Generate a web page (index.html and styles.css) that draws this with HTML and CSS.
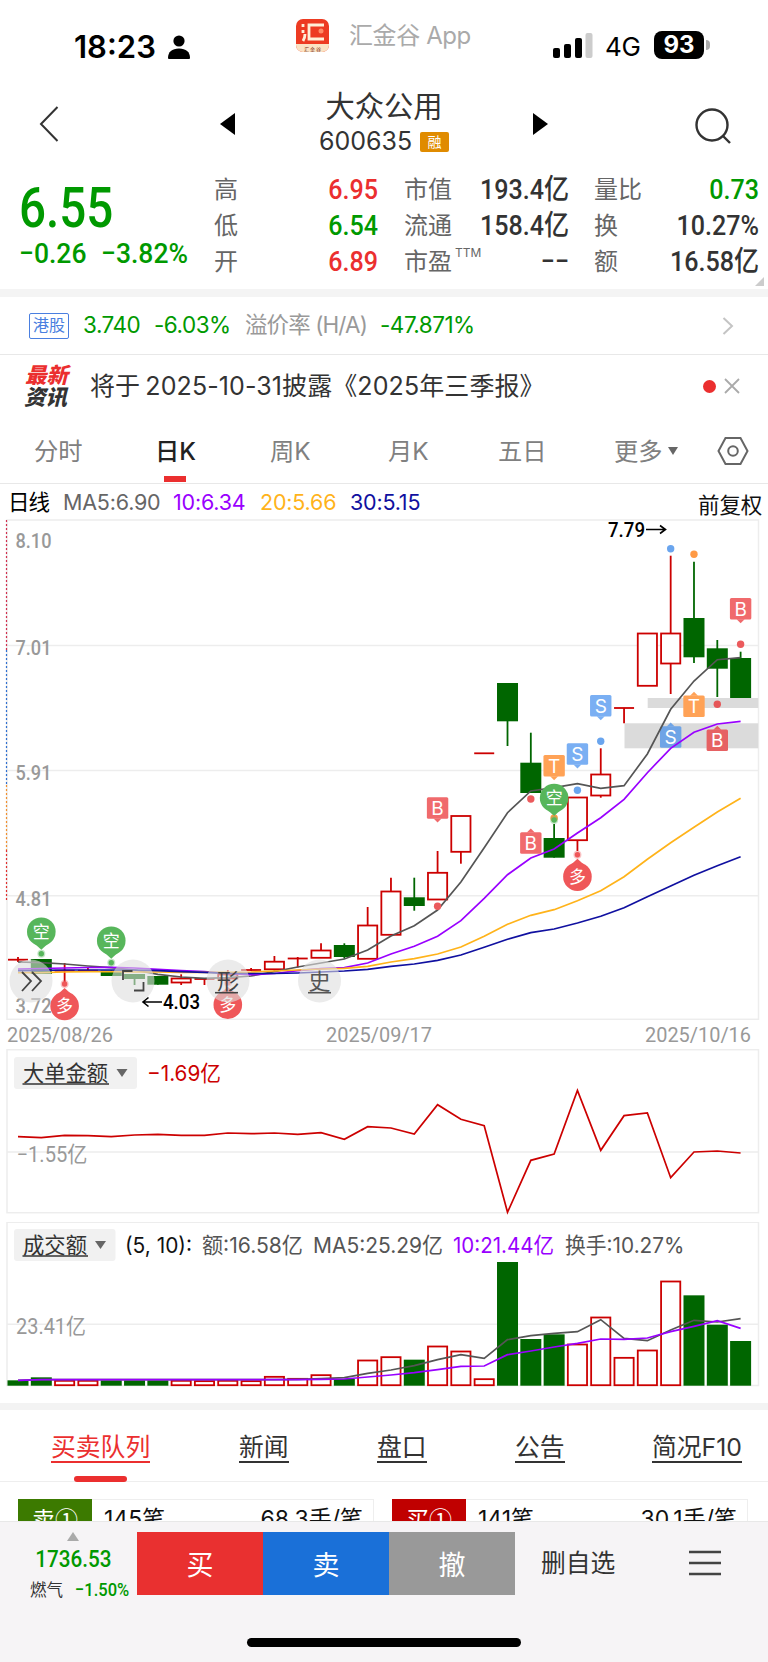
FILE: index.html
```html
<!DOCTYPE html>
<html lang="zh-CN">
<head>
<meta charset="UTF-8">
<meta name="viewport" content="width=device-width, initial-scale=1.0">
<title>大众公用 600635</title>
<link rel="stylesheet" href="styles.css">
</head>
<body>

<div class="status-bar">
    <span class="clock">18:23</span>
    <svg class="person" width="22" height="24" viewBox="0 0 22 24"><circle cx="11" cy="6" r="5.6"/><path d="M0 23C0 17 4 13.500 11 13.500S22 17 22 23Q22 24 21 24H1Q0 24 0 23Z"/></svg>
    <svg class="app-icon" width="33" height="33" viewBox="0 0 33 33">
        <rect width="33" height="33" rx="7" fill="#ed3b22"/>
        <path d="M0 25H33V26A7 7 0 0 1 26 33H7A7 7 0 0 1 0 26Z" fill="#fbe3c4"/>
        <path d="M28 6H13V20H28M7 5V8M7 11V14M9 15Q9 19 7 22" fill="none" stroke="#fff0d8" stroke-width="2.800"/>
        <circle cx="25" cy="12" r="2.500" fill="#ff8a66"/>
        <text x="8" y="31.500" font-size="5" fill="#7a2a10" textLength="17">汇金谷</text>
    </svg>
    <span class="app-name">汇金谷 App</span>
    <svg class="signal" width="40" height="26" viewBox="0 0 40 26">
        <rect x="0" y="15" width="7" height="10" rx="2"/>
        <rect x="11" y="11" width="7" height="14" rx="2"/>
        <rect x="22" y="5" width="7" height="20" rx="2"/>
        <rect x="32.500" y="0" width="7" height="25" rx="2" fill="#ccc"/>
    </svg>
    <span class="network">4G</span>
    <span class="battery">93</span>
    <span class="battery-tip"></span>
</div>

<div class="title-bar">
    <svg class="back" width="20" height="38" viewBox="0 0 20 38"><path d="M18.500 2L2 19L18.500 36" fill="none" stroke="#333" stroke-width="2"/></svg>
    <svg class="prev" width="15" height="22" viewBox="0 0 15 22"><path d="M15 0V22L0 11Z"/></svg>
    <div class="stock">
        <div class="stock-name">大众公用</div>
        <div class="stock-code"><span>600635</span><i>融</i></div>
    </div>
    <svg class="next" width="15" height="22" viewBox="0 0 15 22"><path d="M0 0V22L15 11Z"/></svg>
    <svg class="search" width="38" height="38" viewBox="0 0 38 38"><g fill="none" stroke="#333" stroke-width="2.400"><circle cx="18" cy="18" r="15.500"/><path d="M28.500 28.500L36 36"/></g></svg>
</div>

<div class="quote">
    <div class="price down">
        <div class="last"><b class="din">6.55</b></div>
        <div class="change"><b class="din">−0.26</b><b class="din">−3.82%</b></div>
    </div>
    <dl class="stats col-a">
        <dt>高</dt><dd class="din up">6.95</dd>
        <dt>低</dt><dd class="din down">6.54</dd>
        <dt>开</dt><dd class="din up">6.89</dd>
    </dl>
    <dl class="stats col-b">
        <dt>市值</dt><dd class="din">193.4亿</dd>
        <dt>流通</dt><dd class="din">158.4亿</dd>
        <dt>市盈<sup>TTM</sup></dt><dd class="din">−−</dd>
    </dl>
    <dl class="stats col-c">
        <dt>量比</dt><dd class="din down">0.73</dd>
        <dt>换</dt><dd class="din">10.27%</dd>
        <dt>额</dt><dd class="din">16.58亿</dd>
    </dl>
    <span class="corner"></span>
</div>

<div class="hk-row">
    <span class="hk-tag">港股</span>
    <span class="hk-price">3.740</span>
    <span class="hk-change">-6.03%</span>
    <span class="hk-label">溢价率 (H/A)</span>
    <span class="hk-premium">-47.871%</span>
    <svg class="arrow" width="12" height="18" viewBox="0 0 12 18"><path d="M1.500 1L10 9L1.500 17" fill="none" stroke="#c4c4c4" stroke-width="2"/></svg>
</div>

<div class="news">
    <div class="news-logo"><span>最新</span><span>资讯</span></div>
    <div class="news-text">将于 2025-10-31披露《2025年三季报》</div>
    <span class="news-dot"></span>
    <svg width="16" height="16" viewBox="0 0 16 16"><path d="M1 1L15 15M15 1L1 15" stroke="#aaa" stroke-width="1.800"/></svg>
</div>

<div class="period-tabs">
    <span>分时</span>
    <span class="active">日K</span>
    <span>周K</span>
    <span>月K</span>
    <span>五日</span>
    <span class="more">更多<i class="caret"></i></span>
    <svg class="setting" width="32" height="30" viewBox="0 0 32 30"><g fill="none" stroke="#666" stroke-width="2"><path d="M8.500 2H23.500L30.500 15L23.500 28H8.500L1.500 15Z"/><circle cx="16" cy="15" r="4.800"/></g></svg>
</div>

<div class="ma-row">
    <span class="ma-name">日线</span>
    <span class="ma5">MA5:6.90</span>
    <span class="ma10">10:6.34</span>
    <span class="ma20">20:5.66</span>
    <span class="ma30">30:5.15</span>
    <span class="adjust">前复权</span>
</div>

<svg id="kline" class="chart" width="768" height="530" viewBox="0 519 768 530"></svg>
<svg id="bigOrder" class="chart" width="768" height="173" viewBox="0 1049 768 173"></svg>
<svg id="turnover" class="chart" width="768" height="181" viewBox="0 1222 768 181"></svg>

<div class="info-tabs">
    <span class="active"><u>买卖队列</u></span>
    <span><u>新闻</u></span>
    <span><u>盘口</u></span>
    <span><u>公告</u></span>
    <span><u>简况F10</u></span>
</div>

<div class="queue">
    <div class="queue-box sell"><b>卖①</b><span>145笔</span><span>68.3手/笔</span></div>
    <div class="queue-box buy"><b>买①</b><span>141笔</span><span>30.1手/笔</span></div>
</div>

<div class="bottom-bar">
    <div class="actions">
        <div class="index">
            <i class="index-up"></i>
            <b class="din">1736.53</b>
            <div class="index-sub"><span>燃气</span><b class="din">−1.50%</b></div>
        </div>
        <button class="btn buy">买</button>
        <button class="btn sell">卖</button>
        <button class="btn cancel">撤</button>
        <span class="remove">删自选</span>
        <svg width="32" height="26" viewBox="0 0 32 26"><path d="M0 2H32M0 13H32M0 24H32" stroke="#444" stroke-width="2.400"/></svg>
    </div>
    <div class="home-bar"></div>
</div>

<script src="chart.js"></script>
</body>
</html>
```

FILE: styles.css
```css
* {
    box-sizing: border-box;
}
body {
    margin: 0;
    width: 768px;
    height: 1662px;
    overflow: hidden;
    background: #fff;
    color: #333;
    font-family: Inter, "Noto Sans CJK SC", sans-serif;
    font-size: 24px;
    line-height: 1;
    white-space: nowrap;
}
svg {
    display: block;
    flex: none;
}
i {
    font-style: normal;
}
.din {
    font-family: Roboto, "Noto Sans CJK SC", sans-serif;
    font-weight: 500;
    display: block;
    transform: scaleX(.88);
    transform-origin: left;
}
.up {
    color: #eb2f2f !important;
}
.down {
    color: #009900 !important;
}

/* status bar */
.status-bar {
    display: flex;
    height: 84px;
    padding-left: 74px;
    color: #000;
}
.clock {
    width: 94px;
    padding-top: 31px;
    font-size: 31px;
    font-weight: 600;
    letter-spacing: 0;
}
.person {
    margin-top: 35px;
}
.app-icon {
    margin: 19px 20px 0 106px;
}
.app-name {
    width: 204px;
    padding-top: 24px;
    font-size: 24px;
    letter-spacing: -.4px;
    color: #aaa;
}
.signal {
    margin-top: 33px;
}
.network {
    width: 50px;
    padding: 34px 0 0 12px;
    font-size: 26px;
    letter-spacing: -.3px;
}
.battery {
    width: 50px;
    height: 28px;
    margin-top: 31px;
    margin-left: 11px;
    border-radius: 8px;
    background: #000;
    color: #fff;
    font-size: 24px;
    font-weight: 700;
    line-height: 28px;
    text-align: center;
}
.battery-tip {
    width: 4px;
    height: 10px;
    margin: 40px 0 0 2px;
    border-radius: 0 5px 5px 0;
    background: #aaa;
}

/* title */
.title-bar {
    display: flex;
    height: 83px;
    padding-left: 39px;
}
.back {
    margin-top: 21px;
}
.prev {
    margin: 29px 0 0 161px;
}
.stock {
    width: 298px;
    padding-top: 8px;
    text-align: center;
}
.stock-name {
    font-size: 29.3px;
}
.stock-code {
    display: flex;
    align-items: center;
    justify-content: center;
    margin-top: 8px;
    font-size: 25px;
}
.stock-code i {
    width: 29px;
    height: 20px;
    margin-left: 8px;
    border-radius: 2px;
    background: #e08b00;
    color: #fff;
    font-size: 14px;
    line-height: 20px;
}
.next {
    margin-top: 29px;
}
.search {
    margin: 23px 0 0 146px;
}

/* quote */
.quote {
    display: flex;
    position: relative;
    height: 122px;
}
.price {
    width: 214px;
    padding: 13px 0 0 19px;
}
.last {
    font-size: 56px;
}
.last .din {
    transform: scaleX(.85);
}
.change {
    display: flex;
    margin-top: 4px;
    font-size: 28.5px;
}
.change .din {
    width: 82px;
    transform: scaleX(.93);
}
.stats {
    display: grid;
    grid-template-columns: auto 1fr;
    grid-template-rows: 36px 36px 36px;
    margin: 5px 0 0;
    line-height: 36px;
}
.stats dt {
    color: #666;
}
.stats dd {
    margin: 0;
    text-align: right;
    font-size: 28.5px;
    transform-origin: right;
}
.stats sup {
    display: inline-block;
    width: 0;
    font-size: 12px;
    line-height: 1;
    vertical-align: 13px;
    text-indent: 3px;
}
.col-a {
    width: 164px;
}
.col-b {
    width: 165px;
    margin-left: 26px;
}
.col-c {
    width: 165px;
    margin-left: 25px;
}
.corner {
    position: absolute;
    right: 4px;
    bottom: 3px;
    border-left: 9px solid transparent;
    border-bottom: 9px solid #ccc;
}

/* H share row */
.hk-row {
    display: flex;
    align-items: center;
    height: 66px;
    padding: 8px 34px 0 29px;
    border-bottom: 1px solid #e8e8e8;
    background: linear-gradient(#f4f4f4 8px, #fff 8px);
    font-size: 22.5px;
    color: #009900;
}
.hk-tag {
    width: 40px;
    height: 26px;
    border: 1.500px solid #4a7fe0;
    border-radius: 2px;
    color: #4a7fe0;
    font-size: 16px;
    line-height: 23px;
    text-align: center;
}
.hk-price {
    width: 71px;
    margin-left: 14px;
    letter-spacing: -.5px;
}
.hk-change {
    width: 91px;
    letter-spacing: -.5px;
}
.hk-label {
    width: 135px;
    color: #999;
    letter-spacing: -.9px;
}
.hk-premium {
    letter-spacing: -.5px;
}
.arrow {
    margin-left: auto;
}

/* news */
.news {
    display: flex;
    align-items: center;
    height: 64px;
    padding: 0 28px 2px 24px;
}
.news-logo {
    display: grid;
    width: 66px;
    color: #333;
    font-size: 21.5px;
    font-weight: 900;
    font-style: italic;
    line-height: 22px;
}
.news-logo span:first-child {
    padding-left: 1px;
    color: #eb2f2f;
}
.news-text {
    flex: 1;
    font-size: 25px;
    letter-spacing: .1px;
    word-spacing: -2px;
}
.news-dot {
    width: 13px;
    height: 13px;
    margin-right: 8px;
    border-radius: 50%;
    background: #eb2f2f;
}

/* period tabs */
.period-tabs {
    display: grid;
    grid-template-columns: 121px 115px 118px 110px 116px 103px 32px;
    align-items: center;
    height: 65px;
    padding-left: 34px;
    border-bottom: 1px solid #e8e8e8;
    color: #808080;
    font-size: 24.3px;
}
.period-tabs .active {
    position: relative;
    color: #222;
    font-weight: 500;
}
.period-tabs .active::after {
    content: "";
    position: absolute;
    left: 9px;
    top: 37px;
    width: 22px;
    height: 6px;
    background: #eb2f2f;
}
.more {
    display: flex;
    align-items: center;
}
.caret {
    margin-left: 5px;
    border: 5.500px solid transparent;
    border-top: 8px solid #666;
    border-bottom: 0;
}

/* moving averages */
.ma-row {
    display: flex;
    align-items: center;
    height: 35px;
    padding: 2px 6px 0 8px;
    font-size: 21.5px;
    letter-spacing: -.2px;
}
.ma-name {
    width: 55px;
    color: #000;
    letter-spacing: -1px;
}
.ma5 {
    width: 110px;
    color: #666;
}
.ma10 {
    width: 87px;
    color: #9900ff;
}
.ma20 {
    width: 90px;
    color: #ffb31a;
}
.ma30 {
    color: #1010a0;
}
.adjust {
    margin-left: auto;
    padding-top: 6px;
    color: #111;
}

/* charts */
.chart text {
    font-family: Roboto, "Noto Sans CJK SC", sans-serif;
}
.chart .ui {
    font-family: Inter, "Noto Sans CJK SC", sans-serif;
}

/* info tabs */
.info-tabs {
    display: grid;
    grid-template-columns: 188px 138px 138px 137px 1fr;
    height: 79px;
    padding: 25px 0 0 51px;
    border-top: 7px solid #f3f3f3;
    border-bottom: 1px solid #eee;
}
.info-tabs span {
    position: relative;
}
.info-tabs u {
    display: inline-block;
    height: 28px;
    border-bottom: 2px solid currentColor;
    font-size: 24.8px;
    text-decoration: none;
}
.info-tabs .active {
    color: #eb2f2f;
}
.info-tabs .active::after {
    content: "";
    position: absolute;
    left: 23px;
    top: 41px;
    width: 53px;
    height: 6px;
    border-radius: 3px;
    background: #eb2f2f;
}

/* order queue */
.queue {
    display: grid;
    grid-template-columns: 356px 356px;
    gap: 18px;
    height: 39px;
    padding: 17px 0 0 18px;
    overflow: hidden;
}
.queue-box {
    display: flex;
    height: 40px;
    padding-right: 10px;
    border: 1px solid #eee;
    border-left: 0;
    color: #111;
    font-size: 23px;
    line-height: 38px;
}
.queue-box b {
    width: 74px;
    height: 40px;
    margin: -1px 12px 0 0;
    color: #fff;
    font-family: "Noto Sans CJK SC", sans-serif;
    font-weight: 400;
    text-align: center;
}
.queue-box span:last-child {
    margin-left: auto;
}
.queue .sell b {
    background: #3c7a00;
}
.queue .buy b {
    background: #c00000;
}

/* bottom bar */
.bottom-bar {
    height: 141px;
    border-top: 1px solid #e8e8e8;
    background: #f6f4f6;
}
.actions {
    display: flex;
    align-items: center;
    height: 82px;
}
.index {
    display: flex;
    flex-direction: column;
    align-items: center;
    width: 137px;
    height: 82px;
    padding-top: 10px;
    color: #009900;
}
.index-up {
    margin-left: 9px;
    border: 6px solid transparent;
    border-top: 0;
    border-bottom: 9px solid #aaa;
}
.index > .din {
    margin: 7px 0 0 9px;
    font-size: 23.5px;
    transform-origin: center;
}
.index-sub {
    display: flex;
    align-items: center;
    align-self: flex-end;
    width: 107px;
    margin-top: 9px;
    color: #333;
    font-size: 16.5px;
}
.index-sub .din {
    margin-left: 12px;
    color: #009900;
    font-size: 18.8px;
}
.btn {
    width: 126px;
    height: 63px;
    padding: 0;
    border: 0;
    color: #fff;
    font: 27px "Noto Sans CJK SC", sans-serif;
}
.btn.buy {
    background: #e93030;
}
.btn.sell {
    background: #1a70d8;
}
.btn.cancel {
    background: #999;
}
.remove {
    width: 148px;
    margin-left: 26px;
    font-size: 24.8px;
}
.home-bar {
    width: 274px;
    height: 9px;
    margin: 34px auto 0;
    border-radius: 5px;
    background: #000;
}
```

FILE: chart.js
```js
const RED = '#cc0000';
const GREEN = '#006600';
const GRID = '#ededed';
const px = i => 18 + i * 23.31;

const line = (x1, y1, x2, y2, color, w = 2, extra = '') =>
    `<line x1="${x1}" y1="${y1}" x2="${x2}" y2="${y2}" stroke="${color}" stroke-width="${w}" ${extra}/>`;
const text = (x, y, str, size, color, len, extra = '') =>
    `<text x="${x}" y="${y}" font-size="${size}" fill="${color}" ${len ? `textLength="${len}" lengthAdjust="spacingAndGlyphs"` : ''} ${extra}>${str}</text>`;
const curve = (values, color, w = 1.7) =>
    `<polyline points="${values.map((v, i) => px(i) + ',' + v).join(' ')}" fill="none" stroke="${color}" stroke-width="${w}"/>`;
const frame = (y1, y2) => `<rect x="7" y="${y1}" width="751.5" height="${y2 - y1}" fill="none" stroke="${GRID}" stroke-width="1.5"/>`;
const box = (x, top, bottom, up) => up
    ? `<rect x="${x - 9.6}" y="${top + 0.5}" width="19.2" height="${Math.max(bottom - top - 1, 0.5)}" fill="#fff" stroke="${RED}" stroke-width="1.8"/>`
    : `<rect x="${x - 10.5}" y="${top}" width="21" height="${bottom - top}" fill="${GREEN}"/>`;

// type (r = up, g = down), body top, body bottom, high, low
const candles = [
    ['r', 959.7, 959.7, 957, 962], ['g', 959, 974, 959, 974], ['r', 970.7, 970.7, 963, 983],
    ['r', 970.7, 970.7, 968, 971], ['g', 970.5, 976, 970, 976], ['g', 974, 979, 974, 985],
    ['g', 976, 984.7, 976, 984.7], ['r', 978, 983, 974.3, 985], ['r', 979, 979, 979, 985],
    ['r', 974, 979, 970, 984], ['r', 970, 970, 968, 971], ['r', 961.2, 969.8, 956, 970.7],
    ['r', 958.5, 958.5, 957, 967.5], ['r', 950, 958.3, 943.3, 958], ['g', 945, 957, 943.3, 958.7],
    ['r', 925, 959.3, 907, 959], ['r', 891, 935.3, 877.7, 935], ['g', 897.3, 906, 877.7, 910.7],
    ['r', 872.3, 900, 851, 900], ['r', 815.5, 852.3, 816, 863.7], ['r', 753.3, 753.3, 753.3, 753.3],
    ['g', 683, 721.3, 683, 746], ['g', 762.7, 793, 732.7, 793], ['g', 838, 857.7, 824, 857.7],
    ['r', 797, 840.7, 797, 851], ['r', 774, 796, 748.3, 797.7], ['r', 708, 708, 708, 723.3],
    ['r', 633, 686.3, 633, 686], ['r', 633, 664, 555.7, 694], ['g', 618, 657.3, 561.7, 663],
    ['g', 648.3, 668.7, 640, 697], ['g', 658, 698, 651.7, 698]
];
const ma5 = [962, 962.7, 964, 966, 967.7, 970, 974.3, 977, 978.3, 977.7, 976, 971.7, 967, 963, 959, 950, 936, 925.7, 910, 882, 847.7, 812.7, 791, 787.7, 783.7, 788.3, 785.7, 754, 709.3, 681, 659.7, 657.7];
const ma10 = [969, 968.5, 968, 967.5, 967.3, 968, 969.3, 970.7, 971.7, 973.5, 974.7, 973.5, 970.7, 968.7, 967.7, 963, 954, 946.3, 936.3, 920.7, 898.3, 874.7, 858, 849, 833, 817.7, 799.3, 772.7, 748.3, 732.3, 724, 721.3];
const ma20 = [972.7, 972.7, 972, 971.7, 971.7, 972, 972, 972.3, 972.3, 972.3, 972, 971, 970, 969, 968.3, 966.3, 962, 958.7, 954, 947, 936.3, 924.3, 915.3, 909.7, 900.7, 890.7, 876.7, 859.3, 842.7, 827.3, 812, 798.3];
const ma30 = [970.7, 970.3, 970, 970, 970, 970, 970.7, 971.7, 972.3, 973.3, 973.5, 973.5, 973, 972, 971, 969.3, 966.3, 964, 960.3, 955, 947.3, 939.3, 932.7, 929, 923, 916.3, 907.7, 896.7, 886, 875.3, 865.7, 856.7];

const tagColors = {B: '#f06a6c', S: '#7aaff3', T: '#ffa256'};
// signal tag, dir 1 points down, -1 points up
const tag = (i, y, name, dir, color = tagColors[name]) => {
    const x = px(i);
    return `<rect x="${x - 10.7}" y="${y - 10.7}" width="21.4" height="21.4" rx="1.5" fill="${color}"/>` +
        `<path d="M${x - 4} ${y + dir * 10.5}h8l-4 ${dir * 4}z" fill="${color}"/>` +
        text(x, y + 7, name, 19, '#fff', 0, 'text-anchor="middle" class="ui"');
};
const dot = (i, y, color) => `<circle cx="${px(i)}" cy="${y}" r="3.7" fill="${color}"/>`;
const pin = (i, y, name) => {
    const x = px(i);
    const dir = name === '空' ? 1 : -1;
    const color = dir === 1 ? '#57b65b' : '#ef5759';
    return `<circle cx="${x}" cy="${y + dir * 22}" r="4" fill="${color}" fill-opacity=".35"/>` +
        `<circle cx="${x}" cy="${y + dir * 22}" r="2.7" fill="${color}"/>` +
        `<circle cx="${x}" cy="${y}" r="14.3" fill="${color}"/>` +
        `<path d="M${x - 6} ${y + dir * 12.5}h12l-6 ${dir * 5.5}z" fill="${color}"/>` +
        text(x, y + 6, name, 17, '#fff', 0, 'text-anchor="middle"');
};

// K line
let k = frame(520, 1019.3);
[645.5, 770.5, 895.7].forEach(y => k += line(7, y, 758, y, GRID, 1.5));
[[520, 650, '#d03050'], [650, 785, '#3070d0'], [785, 850, '#f09030'], [850, 902, '#e03030']].forEach(s => k += line(6.5, s[0], 6.5, s[1], s[2], 1.2, 'stroke-dasharray="2 2"'));
k += '<rect x="647.700" y="698" width="110.500" height="10" fill="#dbdbdb"/><rect x="624.500" y="723.300" width="133.700" height="25" fill="#dbdbdb"/>';
[['8.10', 548], ['7.01', 655], ['5.91', 780], ['4.81', 905.5], ['3.72', 1013]].forEach(l => k += text(15.5, l[1], l[0], 21, '#999', 36, 'font-weight="500"'));
candles.forEach(([type, top, bottom, high, low], i) => {
    const x = px(i);
    const color = type === 'r' ? RED : GREEN;
    if (high < low) k += line(x, high, x, low, color, 1.8);
    if (top === bottom) k += line(x - 10, top, x + 10, top, color, 1.8);
    else k += box(x, top, bottom, type === 'r');
});
k += tag(28, 737, 'S', -1, '#6fa4e6') + tag(30, 740.3, 'B', -1, '#e66163');
k += curve(ma5, '#555') + curve(ma10, '#9900ff') + curve(ma20, '#ffb31a') + curve(ma30, '#1010a0');
k += tag(18, 808, 'B', 1) + tag(22, 843, 'B', -1) + tag(23, 765.7, 'T', 1) + tag(24, 754, 'S', 1);
k += tag(25, 705.7, 'S', 1) + tag(31, 608.7, 'B', 1) + tag(29, 706.3, 'T', -1);
k += dot(28, 548.7, '#6aa5ee') + dot(29, 554.3, '#ff9a45') + dot(31, 644.3, '#eb5a5c') + dot(30, 704.3, '#e65658');
k += dot(25, 741.3, '#6aa5ee') + dot(24, 790.3, '#6aa5ee') + dot(22, 799, '#eb5a5c') + dot(18, 906.3, '#eb5a5c') + dot(23, 818, '#ff9a45');
k += pin(1, 931.7, '空') + pin(4, 940.7, '空') + pin(23, 798, '空');
k += pin(2, 1006, '多') + pin(9, 1004.7, '多') + pin(24, 876.7, '多');
k += text(608, 537, '7.79', 21, '#000', 37, 'font-weight="500"') + '<path d="M646 529.500H665M660 525.500L665.500 529.500L660 533.500" fill="none" stroke="#000" stroke-width="1.600"/>';
k += text(163, 1008.5, '4.03', 21, '#000', 37, 'font-weight="500"') + '<path d="M162 1002H143M148.500 997.500L143 1002L148.500 1006.500" fill="none" stroke="#000" stroke-width="1.600"/>';

// floating round buttons
[31, 133, 228, 319.5].forEach(x => k += `<circle cx="${x}" cy="981" r="21.5" fill="#dedede" fill-opacity=".6"/>`);
k += '<path d="M22 972L31 981L22 991M32 972L41 981L32 991" fill="none" stroke="#444" stroke-width="1.800"/>';
k += '<path d="M123 980V971H132.500M134 990.500H143.500V982" fill="none" stroke="#444" stroke-width="1.800"/>';
k += text(228, 989, '形', 22, '#444', 0, 'text-anchor="middle"') + line(215, 992.7, 238, 992.7, '#444', 1.6);
k += text(319.5, 989, '史', 22, '#555', 0, 'text-anchor="middle"') + line(308, 992.7, 331, 992.7, '#555', 1.6);
[['2025/08/26', 7], ['2025/09/17', 326], ['2025/10/16', 645]].forEach(d => k += text(d[1], 1042.3, d[0], 21, '#999', 106, ''));
document.getElementById('kline').innerHTML = k;

// picker button with underlined name
const picker = (y, width, name, nameWidth) =>
    `<rect x="14" y="${y}" width="${width}" height="32" rx="3" fill="#f1f1f1"/>` +
    text(23, y + 23.5, name, 21.5, '#333', nameWidth) +
    line(22.5, y + 27, 24 + nameWidth, y + 27, '#333', 1.5) +
    `<path d="M${width - 6.5} ${y + 12}h11l-5.5 8z" fill="#666"/>`;

// big order net amount
const orders = [290, 293, 286, 287, 290, 285, 283, 286, 286, 279, 281, 279, 283, 278, 298, 260, 264, 282, 194, 238, 257, 517, 361, 342, 151, 331, 227, 219, 413, 336, 333, 339];
let b = frame(1049.7, 1212.7) + line(7, 1152, 758, 1152, GRID, 1.5);
b += picker(1057, 123, '大单金额', 85);
b += text(147, 1080.5, '−1.69亿', 21.5, RED, 74, 'class="ui"');
b += text(16.500, 1162, '−1.55亿', 22, '#999', 71);
b += curve(orders.map(v => 1040 + v / 3), RED);
document.getElementById('bigOrder').innerHTML = b;

// turnover
const bars = 'g511 g502 r511 r511 g511 g511 g511 r511 r512 r511 r512 r499 r505 r494 g507 r450 r440 g449 r408 r423 r506 g156 g387 g373 r402 r321 r442 r420 r213 g256 g344 g393'.split(' ');
const vol5 = [511, 509, 509, 509, 509, 509, 509, 509, 509, 509, 509, 509, 508, 506, 503, 490, 480, 467, 449, 434, 445, 389, 377, 370, 365, 329, 385, 392, 360, 331, 336, 326];
const vol10 = [511, 509, 509, 509, 509, 509, 509, 509, 509, 509, 509, 509, 509, 508, 507, 501, 495, 488, 479, 469, 468, 434, 423, 411, 400, 387, 388, 384, 365, 349, 332, 355];
let v = frame(1222.3, 1385.5) + line(7, 1324.3, 758, 1324.3, GRID, 1.5);
v += picker(1229, 101.5, '成交额', 64);
v += text(125, 1253, '(5, 10):', 21.5, '#111', 67, 'class="ui"');
v += text(202, 1253, '额:16.58亿', 21.5, '#555', 101, 'class="ui"');
v += text(313, 1253, 'MA5:25.29亿', 21.5, '#555', 130, 'class="ui"');
v += text(453, 1253, '10:21.44亿', 21.5, '#9900ff', 101, 'class="ui"');
v += text(565, 1253, '换手:10.27%', 21.5, '#555', 119.5, 'class="ui"');
v += text(16, 1334, '23.41亿', 21.5, '#999', 70);
bars.forEach((bar, i) => v += box(px(i), 1210 + bar.slice(1) / 3, 1385.7, bar[0] === 'r'));
v += curve(vol5.map(n => 1210 + n / 3), '#555') + curve(vol10.map(n => 1210 + n / 3), '#9900ff');
document.getElementById('turnover').innerHTML = v;
```
